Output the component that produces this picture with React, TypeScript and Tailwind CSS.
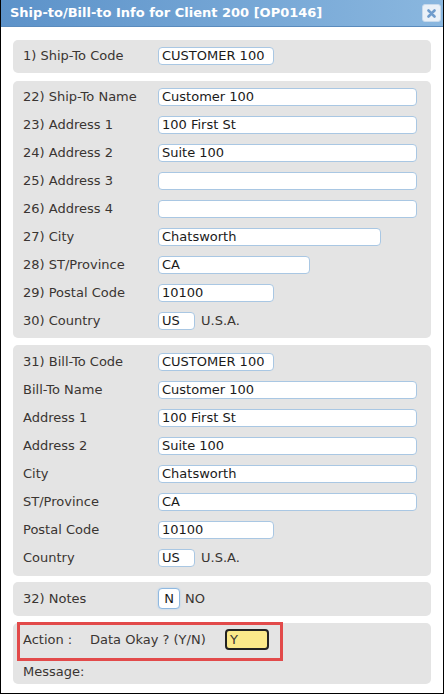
import React from "react";

const font = { fontFamily: '"DejaVu Sans", Verdana, sans-serif' };

function Field({ value, w }: { value: string; w: string }) {
  return (
    <div
      className={`${w} h-[18px] rounded-[4px] border border-[#a9c7e3] bg-white px-[3px] text-[13px] leading-[16px] text-[#1a1a1a]`}
    >
      {value}
    </div>
  );
}

function Row({ label, children }: { label: string; children: React.ReactNode }) {
  return (
    <div className="flex h-[18px] items-center">
      <div className="w-[135px] shrink-0 text-[13px] text-[#3a3532]">{label}</div>
      <div className="flex items-center gap-[6px]">{children}</div>
    </div>
  );
}

function Panel({ children, cls }: { children: React.ReactNode; cls?: string }) {
  return <div className={`rounded-[5px] bg-[#e4e4e4] px-[10px] ${cls ?? ""}`}>{children}</div>;
}

export default function App() {
  return (
    <div style={font} className="flex h-[694px] w-[444px] flex-col border-x border-b border-black bg-white">
      <div className="flex h-[27px] shrink-0 items-center justify-between border-b border-[#5a8bbd] bg-gradient-to-r from-[#5c92c9] to-[#8ab7df] pl-[9px] pr-[2px]">
        <span className="text-[13px] font-bold text-white">Ship-to/Bill-to Info for Client 200 [OP0146]</span>
        <div className="flex h-[18px] w-[19px] items-center justify-center rounded-[3px] border border-[#c8daec] bg-[#eaf1f8]">
          <svg width="9" height="9" viewBox="0 0 9 9">
            <path d="M1.5 1.5 L7.5 7.5 M7.5 1.5 L1.5 7.5" stroke="#6f9ccc" strokeWidth="2.6" strokeLinecap="round" />
          </svg>
        </div>
      </div>

      <div className="flex flex-col px-[12px] pt-[13px]">
        <Panel cls="pt-[7px] pb-[8px]">
          <Row label="1) Ship-To Code">
            <Field value="CUSTOMER 100" w="w-[116px]" />
          </Row>
        </Panel>

        <Panel cls="mt-[8px] flex flex-col gap-[10px] pt-[7px] pb-[8px]">
          <Row label="22) Ship-To Name"><Field value="Customer 100" w="w-[259px]" /></Row>
          <Row label="23) Address 1"><Field value="100 First St" w="w-[259px]" /></Row>
          <Row label="24) Address 2"><Field value="Suite 100" w="w-[259px]" /></Row>
          <Row label="25) Address 3"><Field value="" w="w-[259px]" /></Row>
          <Row label="26) Address 4"><Field value="" w="w-[259px]" /></Row>
          <Row label="27) City"><Field value="Chatsworth" w="w-[223px]" /></Row>
          <Row label="28) ST/Province"><Field value="CA" w="w-[152px]" /></Row>
          <Row label="29) Postal Code"><Field value="10100" w="w-[116px]" /></Row>
          <Row label="30) Country">
            <Field value="US" w="w-[37px]" />
            <span className="text-[13px] text-[#3a3532]">U.S.A.</span>
          </Row>
        </Panel>

        <Panel cls="mt-[7px] flex flex-col gap-[10px] pt-[8px] pb-[9px]">
          <Row label="31) Bill-To Code"><Field value="CUSTOMER 100" w="w-[116px]" /></Row>
          <Row label="Bill-To Name"><Field value="Customer 100" w="w-[259px]" /></Row>
          <Row label="Address 1"><Field value="100 First St" w="w-[259px]" /></Row>
          <Row label="Address 2"><Field value="Suite 100" w="w-[259px]" /></Row>
          <Row label="City"><Field value="Chatsworth" w="w-[259px]" /></Row>
          <Row label="ST/Province"><Field value="CA" w="w-[259px]" /></Row>
          <Row label="Postal Code"><Field value="10100" w="w-[116px]" /></Row>
          <Row label="Country">
            <Field value="US" w="w-[37px]" />
            <span className="text-[13px] text-[#3a3532]">U.S.A.</span>
          </Row>
        </Panel>

        <Panel cls="mt-[6px] pt-[6px] pb-[7px]">
          <div className="flex h-[21px] items-center">
            <div className="w-[135px] shrink-0 text-[13px] text-[#3a3532]">32) Notes</div>
            <div className="flex items-center gap-[5px]">
              <div className="flex h-[21px] w-[22px] items-end justify-center rounded-[4px] border border-[#8fb8e0] bg-white pb-[1px] text-[13px] leading-[16px] text-[#1a1a1a] shadow-[0_0_2px_#a9cdf0]">
                N
              </div>
              <span className="text-[13px] text-[#3a3532]">NO</span>
            </div>
          </div>
        </Panel>

        <Panel cls="relative mt-[7px] h-[61px] pt-[6px]">
          <div className="absolute left-[4px] top-[-1px] h-[39px] w-[266px] border-[3px] border-[#e24a4a]" />
          <div className="flex h-[21px] items-center text-[13px] text-[#3a3532]">
            <span className="w-[67px]">Action :</span>
            <span className="w-[135px]">Data Okay ? (Y/N)</span>
            <div className="h-[21px] w-[44px] rounded-[4px] border-2 border-[#222] bg-[#fbe98a] px-[3px] text-[13px] leading-[17px] text-[#3a3532]">
              Y
            </div>
          </div>
          <div className="mt-[14px] text-[13px] leading-[16px] text-[#3a3532]">Message:</div>
        </Panel>
      </div>
    </div>
  );
}
